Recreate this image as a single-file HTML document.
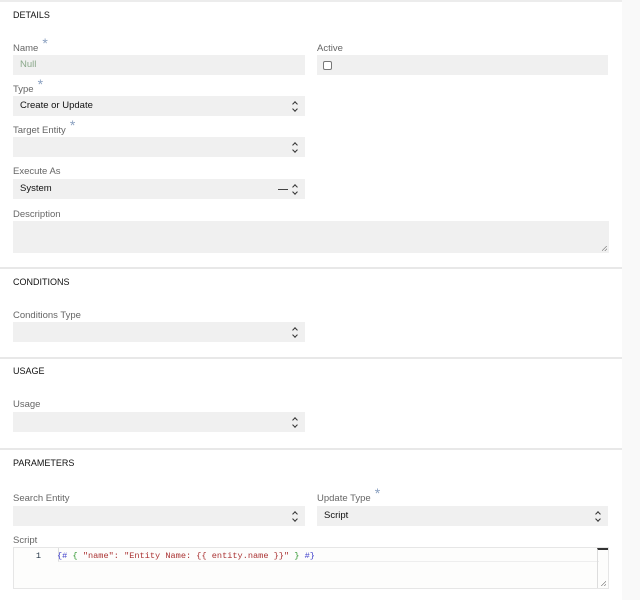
<!DOCTYPE html>
<html><head><style>
body{margin:0;width:640px;height:600px;background:#f9f9f9;position:relative;overflow:hidden;font-family:"Liberation Sans",sans-serif}
#p{position:absolute;left:0;top:0;width:622px;height:600px;background:#fff;border-top:2px solid #ececec;box-sizing:border-box}
.a{position:absolute}
.h{position:absolute;left:13px;font-size:9px;color:#111}
.l{position:absolute;font-size:9.5px;color:#666}
.l i{font-style:normal;color:#8aa0c0;font-size:14px;position:relative;top:-3px;margin-left:4px;line-height:0}
.f{position:absolute;background:#f0f0f0;font-size:9.5px;color:#111;box-sizing:border-box;padding-left:7px;line-height:20px}
.s:after{content:"";position:absolute;right:8px;top:6px;border:solid #333;border-width:1.2px 1.2px 0 0;transform:rotate(-45deg);width:3px;height:3px}
.s:before{content:"";position:absolute;right:8px;top:11px;width:3px;height:3px;border:solid #333;border-width:0 1.2px 1.2px 0;transform:rotate(45deg)}
.d{position:absolute;left:0;width:622px;height:2px;background:#e8e8e8}
.g{position:absolute;right:2px;bottom:2px;width:5px;height:5px;background:linear-gradient(135deg,transparent 45%,#888 45%,#888 55%,transparent 55%,transparent 75%,#888 75%,#888 85%,transparent 85%)}
</style></head><body>
<div id="p">
<div class="h" style="top:8px">DETAILS</div>
<div class="l" style="left:13px;top:41px">Name<i>*</i></div>
<div class="f" style="left:13px;top:53px;width:292px;height:20px;color:#8aa88a">Null</div>
<div class="l" style="left:317px;top:41px">Active</div>
<div class="f" style="left:317px;top:53px;width:291px;height:20px"><div class="a" style="left:6px;top:6px;width:7px;height:7px;border:1px solid #777;border-radius:2px;background:#fff"></div></div>
<div class="l" style="left:13px;top:82px">Type<i>*</i></div>
<div class="f s" style="left:13px;top:94px;width:292px;height:20px">Create or Update</div>
<div class="l" style="left:13px;top:123px">Target Entity<i>*</i></div>
<div class="f s" style="left:13px;top:135px;width:292px;height:20px"></div>
<div class="l" style="left:13px;top:164px">Execute As</div>
<div class="f s" style="left:13px;top:177px;width:292px;height:20px">System<div class="a" style="left:265px;top:10px;width:10px;height:1.3px;background:#444"></div></div>
<div class="l" style="left:13px;top:207px">Description</div>
<div class="f" style="left:13px;top:219px;width:596px;height:32px"><div class="g"></div></div>
<div class="d" style="top:265px"></div>
<div class="h" style="top:275px">CONDITIONS</div>
<div class="l" style="left:13px;top:308px">Conditions Type</div>
<div class="f s" style="left:13px;top:320px;width:292px;height:20px"></div>
<div class="d" style="top:355px"></div>
<div class="h" style="top:364px">USAGE</div>
<div class="l" style="left:13px;top:397px">Usage</div>
<div class="f s" style="left:13px;top:410px;width:292px;height:20px"></div>
<div class="d" style="top:446px"></div>
<div class="h" style="top:456px">PARAMETERS</div>
<div class="l" style="left:13px;top:491px">Search Entity</div>
<div class="f s" style="left:13px;top:504px;width:292px;height:20px"></div>
<div class="l" style="left:317px;top:491px">Update Type<i>*</i></div>
<div class="f s" style="left:317px;top:504px;width:291px;height:20px">Script</div>
<div class="l" style="left:13px;top:533px">Script</div>
<div class="a" style="left:13px;top:545px;width:596px;height:42px;border:1px solid #e6e6e6;background:#fdfdfc;box-sizing:border-box">
<div class="a" style="left:0;top:3px;width:27px;text-align:right;font-family:'Liberation Mono',monospace;font-size:8.6px;color:#234">1</div>
<div class="a" style="left:44px;top:0;width:540px;height:13px;border-bottom:1px solid #eee;border-left:1px solid #ddd"></div>
<div class="a" style="left:43px;top:3px;font-family:'Liberation Mono',monospace;font-size:8.6px;white-space:pre;color:#a33"><span style="color:#44c">{#</span> <span style="color:#393">{</span> "name": "Entity Name: {{ entity.name }}" <span style="color:#393">}</span> <span style="color:#44c">#}</span></div>
<div class="a" style="right:0;top:0;width:11px;height:40px;border-left:1px solid #ddd;border-top:2px solid #333;box-sizing:border-box"></div>
<div class="g"></div>
</div>
</div>
</body></html>
